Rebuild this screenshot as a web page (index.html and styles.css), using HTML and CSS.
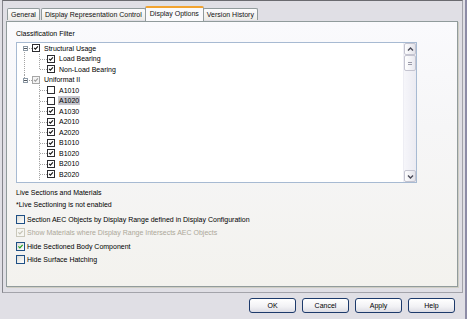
FILE: index.html
```html
<!DOCTYPE html>
<html lang="en">
<head>
  <meta charset="UTF-8" />
  <title>Display Options</title>
  <link rel="stylesheet" href="styles.css">
</head>
<body>

  <div class="window">
    <div class="frame">
      <div class="tabs">
        <div class="tab">General</div>
        <div class="tab">Display Representation Control</div>
        <div class="tab active">Display Options</div>
        <div class="tab">Version History</div>
      </div>

      <div class="panel">
        <div class="caption">Classification Filter</div>

        <div class="tree-box">
          <div class="tree">
            <div class="row">
              <span class="g v-down h"><span class="exp"></span></span>
              <span class="cb on"><svg viewBox="0 0 8 8"><path d="M1.5 3.8 L3.2 5.6 L6.6 1.8" /></svg></span>
              <span class="txt">Structural Usage</span>
            </div>
            <div class="row">
              <span class="g v-full"></span>
              <span class="g v-full h"></span>
              <span class="cb on"><svg viewBox="0 0 8 8"><path d="M1.5 3.8 L3.2 5.6 L6.6 1.8" /></svg></span>
              <span class="txt">Load Bearing</span>
            </div>
            <div class="row">
              <span class="g v-full"></span>
              <span class="g v-up h"></span>
              <span class="cb on"><svg viewBox="0 0 8 8"><path d="M1.5 3.8 L3.2 5.6 L6.6 1.8" /></svg></span>
              <span class="txt">Non-Load Bearing</span>
            </div>
            <div class="row">
              <span class="g v-up h"><span class="exp"></span></span>
              <span class="cb on grey"><svg viewBox="0 0 8 8"><path d="M1.5 3.8 L3.2 5.6 L6.6 1.8" /></svg></span>
              <span class="txt">Uniformat II</span>
            </div>
            <div class="row">
              <span class="g"></span>
              <span class="g v-full h"></span>
              <span class="cb"></span>
              <span class="txt">A1010</span>
            </div>
            <div class="row">
              <span class="g"></span>
              <span class="g v-full h"></span>
              <span class="cb"></span>
              <span class="txt selected">A1020</span>
            </div>
            <div class="row">
              <span class="g"></span>
              <span class="g v-full h"></span>
              <span class="cb on"><svg viewBox="0 0 8 8"><path d="M1.5 3.8 L3.2 5.6 L6.6 1.8" /></svg></span>
              <span class="txt">A1030</span>
            </div>
            <div class="row">
              <span class="g"></span>
              <span class="g v-full h"></span>
              <span class="cb on"><svg viewBox="0 0 8 8"><path d="M1.5 3.8 L3.2 5.6 L6.6 1.8" /></svg></span>
              <span class="txt">A2010</span>
            </div>
            <div class="row">
              <span class="g"></span>
              <span class="g v-full h"></span>
              <span class="cb on"><svg viewBox="0 0 8 8"><path d="M1.5 3.8 L3.2 5.6 L6.6 1.8" /></svg></span>
              <span class="txt">A2020</span>
            </div>
            <div class="row">
              <span class="g"></span>
              <span class="g v-full h"></span>
              <span class="cb on"><svg viewBox="0 0 8 8"><path d="M1.5 3.8 L3.2 5.6 L6.6 1.8" /></svg></span>
              <span class="txt">B1010</span>
            </div>
            <div class="row">
              <span class="g"></span>
              <span class="g v-full h"></span>
              <span class="cb on"><svg viewBox="0 0 8 8"><path d="M1.5 3.8 L3.2 5.6 L6.6 1.8" /></svg></span>
              <span class="txt">B1020</span>
            </div>
            <div class="row">
              <span class="g"></span>
              <span class="g v-full h"></span>
              <span class="cb on"><svg viewBox="0 0 8 8"><path d="M1.5 3.8 L3.2 5.6 L6.6 1.8" /></svg></span>
              <span class="txt">B2010</span>
            </div>
            <div class="row">
              <span class="g"></span>
              <span class="g v-full h"></span>
              <span class="cb on"><svg viewBox="0 0 8 8"><path d="M1.5 3.8 L3.2 5.6 L6.6 1.8" /></svg></span>
              <span class="txt">B2020</span>
            </div>
          </div>

          <div class="vscroll">
            <div class="sbtn"><svg viewBox="0 0 9 9"><path d="M2 5.5 L4.5 3 L7 5.5" /></svg></div>
            <div class="thumb"><span></span><span></span></div>
            <div class="track"></div>
            <div class="sbtn"><svg viewBox="0 0 9 9"><path d="M2 3.5 L4.5 6 L7 3.5" /></svg></div>
          </div>
        </div>

        <div class="caption section-title">Live Sections and Materials</div>
        <div class="caption note">*Live Sectioning is not enabled</div>

        <div class="options">
          <label class="opt">
            <span class="box"></span>
            Section AEC Objects by Display Range defined in Display Configuration
          </label>
          <label class="opt disabled">
            <span class="box on"><svg viewBox="0 0 9 9"><path d="M1.8 4.3 L3.7 6.3 L7.3 2.3" /></svg></span>
            Show Materials where Display Range Intersects AEC Objects
          </label>
          <label class="opt">
            <span class="box on"><svg viewBox="0 0 9 9"><path d="M1.8 4.3 L3.7 6.3 L7.3 2.3" /></svg></span>
            Hide Sectioned Body Component
          </label>
          <label class="opt">
            <span class="box"></span>
            Hide Surface Hatching
          </label>
        </div>
      </div>
    </div>

    <div class="buttons">
      <button>OK</button>
      <button>Cancel</button>
      <button>Apply</button>
      <button>Help</button>
    </div>
  </div>

</body>
</html>
```

FILE: styles.css
```css
body {
  margin: 0;
  background-color: #e0dfe5;
  font-family: "Liberation Sans", Arial, sans-serif;
  font-size: 7px;
  color: #000;
}

.window {
  width: 465px;
  height: 319px;
  border-right: 2px solid #8d8ca6;
  display: flex;
  flex-direction: column;
}

.frame {
  margin-left: 2px;
  width: 461px;
  height: 293px;
  box-sizing: border-box;
  border-top: 1px solid #6b6b70;
  border-left: 1px solid #85858c;
  border-right: 1px solid #a3a3aa;
  border-bottom: 1px solid #a3a3aa;
  padding: 6px 4px 0 3px;
}

/* tabs */

.tabs {
  display: flex;
  align-items: flex-end;
  height: 14px;
  padding-left: 1px;
  position: relative;
  z-index: 1;
}

.tab {
  height: 11px;
  line-height: 11px;
  margin-bottom: 1px;
  padding: 0 3px;
  border: 1px solid #919b9c;
  border-bottom: none;
  border-radius: 2px 2px 0 0;
  background: linear-gradient(#fdfdfe, #ecebe6);
  white-space: nowrap;
  color: #111;
}

.tab + .tab {
  margin-left: 1px;
}

.tab.active {
  height: 13px;
  margin: 0 -1px 0 -1px;
  padding: 0 4px;
  border-top: 2px solid #f2a330;
  background: #fafafc;
  position: relative;
}

.tab.active + .tab {
  margin-left: 0;
}

/* panel */

.panel {
  height: 266px;
  box-sizing: border-box;
  border: 1px solid #919b9c;
  box-shadow: 1px 1px 0 #cfcec4;
  background: linear-gradient(#fafafd, #f6f6f7 40%, #f3f2ee);
  padding: 7px 0 0 9px;
}

.caption {
  line-height: 9px;
  height: 9px;
  white-space: nowrap;
}

.tree-box {
  margin-top: 4px;
  width: 401px;
  height: 141px;
  box-sizing: border-box;
  border: 1px solid #a7bad2;
  background: #fff;
  display: flex;
}

.tree {
  flex: 1;
  overflow: hidden;
}

.row {
  height: 10.5px;
  display: flex;
  align-items: center;
}

.g {
  flex: none;
  width: 15px;
  align-self: stretch;
  display: flex;
  align-items: center;
  justify-content: center;
  background-repeat: no-repeat;
}

.g.v-full {
  background-image: repeating-linear-gradient(to bottom, #a4a4a4 0 1px, transparent 1px 2px);
  background-size: 1px 100%;
  background-position: 7px 0;
}

.g.v-down {
  background-image: repeating-linear-gradient(to bottom, #a4a4a4 0 1px, transparent 1px 2px);
  background-size: 1px 50%;
  background-position: 7px 100%;
}

.g.v-up {
  background-image: repeating-linear-gradient(to bottom, #a4a4a4 0 1px, transparent 1px 2px);
  background-size: 1px 50%;
  background-position: 7px 0;
}

.g.v-full.h,
.g.v-up.h,
.g.v-down.h {
  background-image:
    repeating-linear-gradient(to bottom, #a4a4a4 0 1px, transparent 1px 2px),
    repeating-linear-gradient(to right, #a4a4a4 0 1px, transparent 1px 2px);
  background-size: 1px 100%, 7px 1px;
  background-position: 7px 0, 8px 5px;
}

.g.v-up.h {
  background-size: 1px 50%, 7px 1px;
}

.g.v-down.h {
  background-size: 1px 50%, 7px 1px;
  background-position: 7px 100%, 8px 5px;
}

.exp {
  width: 5px;
  height: 5px;
  box-sizing: border-box;
  border: 1px solid #8d9aa6;
  background: linear-gradient(#ffffff 0 1px, #53585e 1px 2px, #ffffff 2px);
  background-size: 1px 3px;
  background-position: center;
  background-repeat: repeat-x;
  background-color: #fff;
  margin-left: 1px;
  margin-top: 1px;
}

.cb {
  flex: none;
  width: 8px;
  height: 8px;
  box-sizing: border-box;
  border: 1px solid #2c2c30;
  background: #fff;
  display: flex;
}

.cb svg {
  width: 6px;
  height: 6px;
}

.cb svg path {
  fill: none;
  stroke: #111;
  stroke-width: 1.4;
}

.cb.grey {
  border-color: #a6a6a6;
  background: #f4f4f4;
}

.cb.grey svg path {
  stroke: #9c9c9c;
}

.txt {
  margin-left: 4px;
  white-space: nowrap;
  line-height: 9px;
}

.txt.selected {
  background: #c5c5cd;
  padding: 0 1px;
  margin-left: 3px;
}

/* scrollbar */

.vscroll {
  width: 12px;
  display: flex;
  flex-direction: column;
  background: linear-gradient(to right, #f6f6fa, #ebebf2);
  border-left: 1px solid #eeeef4;
}

.sbtn {
  height: 12px;
  box-sizing: border-box;
  border: 1px solid #c4c4d0;
  border-radius: 2px;
  background: linear-gradient(to right, #fdfdfe, #e3e3ea);
  display: flex;
  align-items: center;
  justify-content: center;
}

.sbtn svg {
  width: 9px;
  height: 9px;
}

.sbtn svg path {
  fill: none;
  stroke: #4a4a58;
  stroke-width: 1.4;
}

.thumb {
  height: 16px;
  box-sizing: border-box;
  border: 1px solid #c4c4d0;
  border-radius: 2px;
  background: linear-gradient(to right, #ffffff, #e8e8ef);
  display: flex;
  flex-direction: column;
  align-items: center;
  justify-content: center;
  gap: 1px;
}

.thumb span {
  width: 4px;
  height: 1px;
  background: #9a9aa8;
}

.track {
  flex: 1;
}

/* live sections */

.section-title {
  margin-top: 4px;
  height: 12.4px;
  line-height: 12.4px;
}

.note {
  height: 12.4px;
  line-height: 12.4px;
}

.options {
  margin-top: 1px;
}

.opt {
  height: 13.3px;
  display: flex;
  align-items: center;
  white-space: nowrap;
}

.box {
  flex: none;
  width: 9px;
  height: 9px;
  margin-right: 2px;
  box-sizing: border-box;
  border: 1px solid #1e4f85;
  background: linear-gradient(135deg, #dcdcd6, #ffffff);
  display: flex;
}

.box svg {
  width: 7px;
  height: 7px;
}

.box svg path {
  fill: none;
  stroke: #21a121;
  stroke-width: 1.5;
}

.opt.disabled {
  color: #aca899;
}

.opt.disabled .box {
  border-color: #cac8bb;
  background: #f6f6f2;
}

.opt.disabled .box svg path {
  stroke: #c4c2b4;
}

/* buttons */

.buttons {
  display: flex;
  justify-content: flex-end;
  gap: 6px;
  padding: 5px 10px 0 0;
}

button {
  width: 47px;
  height: 15px;
  padding: 0;
  font-family: "Liberation Sans", Arial, sans-serif;
  font-size: 7px;
  color: #000;
  border: 1px solid #1d3a6b;
  border-radius: 3px;
  background: linear-gradient(#ffffff, #f1f1f4 60%, #dcdce4);
}
```
